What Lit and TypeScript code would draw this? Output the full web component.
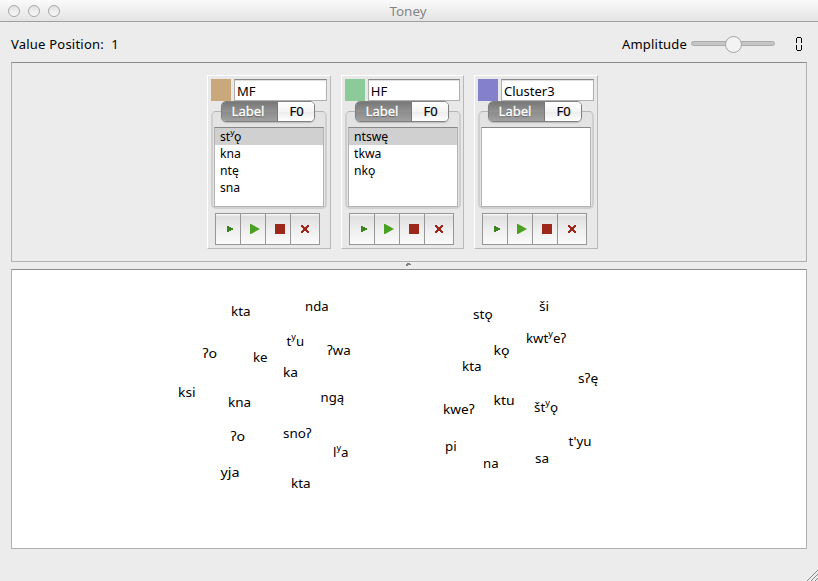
import { LitElement, html, svg, css } from "lit";
import { customElement, property } from "lit/decorators.js";
import { styleMap } from "lit/directives/style-map.js";

// [text, left edge of the ink, right edge of the ink, baseline]
type Word = [string, number, number, number];

const WORDS: Word[] = [
  ["kta", 232, 250, 316], ["nda", 306, 328, 311], ["tʸu", 287.5, 303.5, 346],
  ["ʔwa", 328, 350, 355], ["ʔo", 203.5, 216.5, 358], ["ke", 254, 267, 362],
  ["ka", 284, 297.5, 377], ["ksi", 179, 195, 397], ["kna", 229, 250.5, 407],
  ["ngą", 321.5, 343.5, 402], ["ʔo", 231.5, 244.5, 441], ["snoʔ", 284, 311, 438],
  ["lʸa", 334, 348, 457], ["yja", 221.5, 239, 477], ["kta", 292, 310, 488],
  ["stǫ", 474, 492, 319], ["ši", 540, 548.5, 311], ["kwtʸeʔ", 527, 565.5, 343],
  ["kǫ", 494.5, 509, 355], ["kta", 463, 481, 371], ["sʔę", 579, 597.5, 383],
  ["kweʔ", 444, 474, 414], ["ktu", 494.5, 514, 405], ["štʸǫ", 535, 557.5, 412],
  ["pi", 446, 456, 451], ["na", 484, 498, 468], ["t'yu", 569.5, 591, 446],
  ["sa", 536, 548.5, 463],
];

const word = ([text, left, right, baseline]: Word) => {
  const [head, tail] = text.split("ʸ");
  return svg`<text x=${left - 1} y=${baseline} textLength=${right - left + 1.6} lengthAdjust="spacingAndGlyphs">${head}${
    tail ? svg`<tspan class="glide" dy="-2">ʸ</tspan><tspan dy="2">${tail}</tspan>` : ""
  }</text>`;
};

const label = (text: string) => {
  const [head, tail] = text.split("ʸ");
  return html`${head}${tail ? html`<span class="glide">ʸ</span>${tail}` : ""}`;
};

@customElement("cluster-card")
export class ClusterCard extends LitElement {
  @property() name = "";
  @property() color = "";
  @property({ attribute: false }) items: string[] = [];

  static styles = css`
    :host { display: block; box-sizing: border-box; width: 124px; height: 174px; padding: 3px;
      background: #e8e8e8; border: 1px solid; border-color: #fff #b9b9b9 #b9b9b9 #fff; }
    .head { display: flex; height: 22px; gap: 3px; }
    .swatch { width: 20px; height: 22px; }
    .name { box-sizing: border-box; width: 93px; height: 22px; background: #fff; padding: 0 0 0 2px;
      border: 1px solid #b0b0b0; border-top: 1px solid #888; box-shadow: inset 0 1px 1px #ddd; line-height: 22px; white-space: pre; }
    .tabs { display: flex; position: relative; z-index: 1; width: 94px; height: 21px; margin: 0 0 0 10px; box-sizing: border-box;
      border: 1px solid #808080; border-radius: 5px; overflow: hidden; box-shadow: 0 1px 1px #bbb; }
    .tab { line-height: 18px; text-align: center; box-sizing: border-box; }
    .on { width: 55px; padding-right: 3px; background: linear-gradient(#777, #929292 50%, #8b8b8b 51%, #a0a0a0); color: #fff; text-shadow: 0 1px 1px #444; -webkit-text-stroke: .35px #fff; }
    .off { flex: 1; background: linear-gradient(#fff, #f4f4f4 50%, #ececec 51%, #fff); border-left: 1px solid #777; padding-left: 1px; -webkit-text-stroke: .2px #000; }
    .pane { box-sizing: border-box; width: 116px; height: 98px; margin-top: -11px; padding: 14px 1px 0; background: #e3e3e3;
      border: 2px solid #cfcfcf; border-top: 1px solid #b5b5b5; border-radius: 5px; }
    .list { box-sizing: border-box; width: 110px; height: 80px; background: #fff; border: 1px solid #b4b4b4; border-top-color: #888; margin-top: 1px; font-size: 12.2px; }
    .item { height: 17px; line-height: 18px; padding-left: 5px; }
    .item:first-child { background: #d0d0d0; }
    .glide { font-size: 13px; line-height: 0; position: relative; top: -2px; margin-right: -.5px; }
    .buttons { display: flex; box-sizing: border-box; width: 105px; height: 32px; margin: 4px 0 0 4px; border: 1px solid #969696;
      background: linear-gradient(#f6f6f6 0 1px, #dedede 2px, #eee 50%, #fafafa); }
    .btn { box-sizing: border-box; width: 25px; border-right: 1px solid #969696; display: flex; align-items: center; justify-content: center; }
    .btn:last-child { width: 28px; border: 0; }
    svg { display: block; width: 24px; height: 30px; flex: none; }
    .btn:last-child svg { width: 28px; }
  `;

  render() {
    return html`
      <div class="head"><div class="swatch" style=${styleMap({ background: this.color })}></div><div class="name">${this.name}</div></div>
      <div class="tabs"><div class="tab on">Label</div><div class="tab off">F0</div></div>
      <div class="pane"><div class="list">${this.items.map((t) => html`<div class="item">${label(t)}</div>`)}</div></div>
      <div class="buttons">
        <div class="btn"><svg viewBox="0 0 24 30" shape-rendering="crispEdges"><path fill="#3b8420" d="M11 12h2v1h2v1h2v2h-2v1h-2v1h-2z"/></svg></div>
        <div class="btn"><svg viewBox="0 0 24 30"><path fill="#4aa022" d="M9 10h1l9 5-9 5H9z"/></svg></div>
        <div class="btn"><svg viewBox="0 0 24 30"><path fill="#9c281b" d="M9 10h10v10H9z"/></svg></div>
        <div class="btn"><svg viewBox="0 0 28 30" shape-rendering="crispEdges"><path fill="#9c281b" d="M10 11h2v1h1v1h2v-1h1v-1h2v2h-1v1h-1v2h1v1h1v2h-2v-1h-1v-1h-2v1h-1v1h-2v-2h1v-1h1v-2h-1v-1h-1z"/></svg></div>
      </div>`;
  }
}

@customElement("app-root")
export class AppRoot extends LitElement {
  static styles = css`
    :host { display: flex; flex-direction: column; box-sizing: border-box; position: relative; width: 818px; height: 581px; background: #ececec;
      font: 13px "Noto Sans", "DejaVu Sans", sans-serif; color: #000; overflow: hidden; }
    .title { height: 22px; box-sizing: border-box; border-bottom: 1px solid #a0a0a0; background: linear-gradient(#fafafa, #e4e4e4);
      display: grid; grid-template-columns: 80px 1fr 82px; align-items: center; color: #858585; font-size: 13.4px; }
    .lights { display: flex; gap: 8px; padding-left: 8px; }
    .light { width: 12px; height: 12px; box-sizing: border-box; border: 1px solid #a6a6a6; border-radius: 50%; background: linear-gradient(#e2e2e2, #f8f8f8); }
    .caption { text-align: center; line-height: 20px; }
    .bar { height: 40px; display: flex; align-items: center; padding: 4px 16px 0 11px; box-sizing: border-box; line-height: 20px; }
    .pos { flex: 1; white-space: pre; letter-spacing: .22px; }
    .amp { letter-spacing: .2px; }
    .slider { width: 84px; height: 18px; margin: 0 21px 0 4px; }
    .digit { width: 6px; height: 14px; }
    .clusters { height: 200px; box-sizing: border-box; margin: 0 11px; border: 1px solid #b0b0b0; border-top-color: #8c8c8c;
      display: flex; gap: 10px; padding: 12px 0 0 195px; }
    .clusters cluster-card:nth-child(2) { width: 123px; }
    .divider { height: 7px; display: flex; justify-content: center; padding-right: 2px; }
    .grip { width: 6px; height: 5px; }
    .field { height: 280px; box-sizing: border-box; margin: 0 11px; background: #fff; border: 1px solid #b0b0b0; border-top-color: #8c8c8c; }
    .words { position: absolute; left: 0; top: 0; width: 818px; height: 581px; font-size: 13.2px; }
    .glide { font-size: 14px; }
    .corner { position: absolute; right: 0; bottom: 0; width: 12px; height: 12px; }
  `;

  render() {
    return html`
      <div class="title"><div class="lights"><i class="light"></i><i class="light"></i><i class="light"></i></div><div class="caption">Toney</div></div>
      <div class="bar">
        <div class="pos">Value Position:  1</div><div class="amp">Amplitude</div>
        <svg class="slider" viewBox="0 0 84 18">
          <rect x=".5" y="6.5" width="83" height="4" rx="2" fill="#c6c6c6" stroke="#aaa"/>
          <circle cx="42.5" cy="9.5" r="8" fill="#f3f3f3" stroke="#a2a2a2"/>
        </svg>
        <svg class="digit" viewBox="0 0 6 14"><path fill="none" stroke="#000" d="M1 .5h4M1 13.5h4M.5 1v5M5.5 1v5M.5 8v5M5.5 8v5"/></svg>
      </div>
      <div class="clusters">
        <cluster-card name="MF" color="#c9a97c" .items=${["stʸǫ", "kna", "ntę", "sna"]}></cluster-card>
        <cluster-card name="HF" color="#8dca9a" .items=${["ntswę", "tkwa", "nkǫ"]}></cluster-card>
        <cluster-card name="Cluster3" color="#8480cc"></cluster-card>
      </div>
      <div class="divider"><svg class="grip" viewBox="0 0 6 5"><path fill="#808080" d="M1 2h1V1h3v1h1v1H3v1H1z"/></svg></div>
      <div class="field"></div>
      <svg class="words" viewBox="0 0 818 581">${WORDS.map(word)}</svg>
      <svg class="corner" viewBox="0 0 12 12"><path stroke="#888" d="M1 12L12 1M5 12l7-7M9 12l3-3"/></svg>`;
  }
}
